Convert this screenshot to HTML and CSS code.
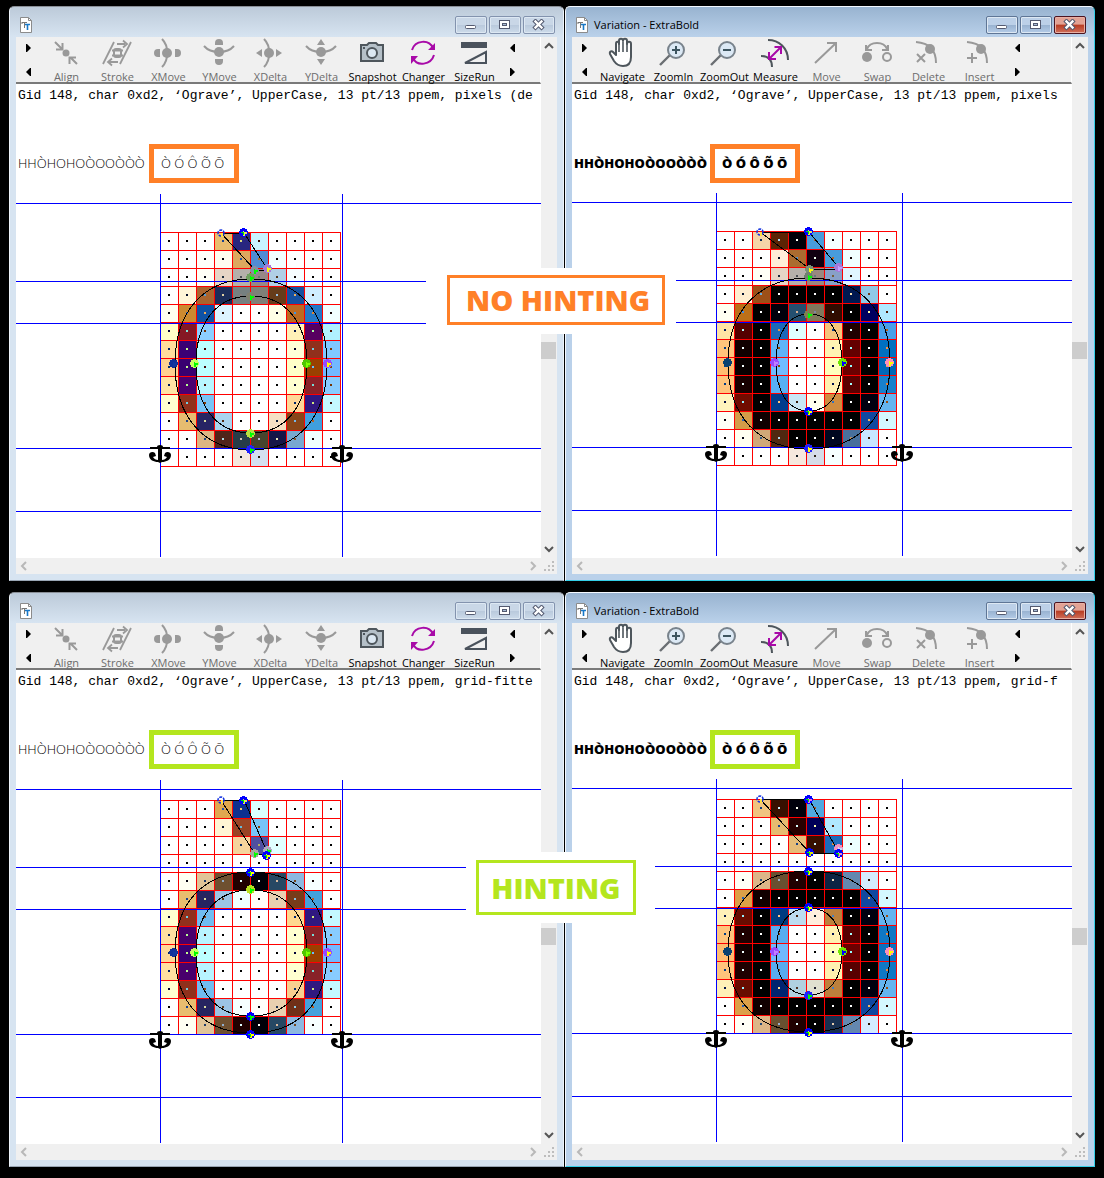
FILE: index.html
```html
<!DOCTYPE html>
<html lang="en">
<head>
<meta charset="utf-8">
<meta name="viewport" content="width=device-width, initial-scale=1">
<title>Hinting comparison</title>
<link rel="stylesheet" href="styles.css">
</head>
<body>
<svg class="sprite" aria-hidden="true">
  <symbol id="doc" viewBox="0 0 12 16"><path d="M.5.5h8l3 3v12H.5z" fill="#fff" stroke="#8b8b8b"/><path d="M8.500.5v3h3" fill="none" stroke="#8b8b8b"/><path d="M2 5.500h5M2 5v2M4.500 5v6" stroke="#777" fill="none"/><path d="M5 7.500h5M7.500 7v6" stroke="#1878c8" stroke-width="1.600" fill="none"/></symbol>
  <symbol id="min" viewBox="0 0 14 12"><rect x="1.500" y="6.500" width="10" height="3" rx="1" fill="#fff" stroke="#545a70"/></symbol>
  <symbol id="max" viewBox="0 0 14 12"><rect x="1.500" y="1.500" width="10" height="8" fill="#fff" stroke="#545a70"/><rect x="4.500" y="4.500" width="4" height="2" fill="#a9bdd6" stroke="#545a70"/></symbol>
  <symbol id="close" viewBox="0 0 14 12"><path d="M3.500 2.500l6 6M9.500 2.500l-6 6" stroke="#545a70" stroke-width="4.400" stroke-linecap="square"/><path d="M3.500 2.500l6 6M9.500 2.500l-6 6" stroke="#fff" stroke-width="2.400" stroke-linecap="square"/></symbol>
  <symbol id="tri-r" viewBox="0 0 5 8"><path d="M0 0h1l4 4-4 4H0z"/></symbol>
  <symbol id="tri-l" viewBox="0 0 5 8"><path d="M5 0H4L0 4l4 4h1z"/></symbol>
  <symbol id="up" viewBox="0 0 16 16"><path d="M4 11l4-4 4 4" fill="none" stroke="currentColor" stroke-width="2"/></symbol>
  <symbol id="down" viewBox="0 0 16 16"><path d="M4 5l4 4 4-4" fill="none" stroke="currentColor" stroke-width="2"/></symbol>
  <symbol id="left" viewBox="0 0 16 16"><path d="M10 4L6 8l4 4" fill="none" stroke="currentColor" stroke-width="2"/></symbol>
  <symbol id="right" viewBox="0 0 16 16"><path d="M6 4l4 4-4 4" fill="none" stroke="currentColor" stroke-width="2"/></symbol>
  <symbol id="grip" viewBox="0 0 16 16"><path d="M11 3h2v2h-2zM11 7h2v2h-2zM11 11h2v2h-2zM7 7h2v2H7zM7 11h2v2H7zM3 11h2v2H3z" fill="#bdbdbd"/></symbol>
  <symbol id="align" viewBox="0 0 32 32"><circle cx="16" cy="16" r="3.500" fill="#999"/><path d="M5 5l7 7M12.500 6v6.500H6M27 27l-6-6M19.500 27v-6.500H26" fill="none" stroke="#999" stroke-width="2"/></symbol>
  <symbol id="stroke" viewBox="0 0 32 32"><path d="M2 27L13 5M19 27L30 5M16 7h8M22 3.500L26 7l-4 3.500M17 25H8M11 21.500L7 25l4 3.500M11 13.500h11M11 18.500h11" fill="none" stroke="#999" stroke-width="1.800"/><rect x="13" y="12" width="7" height="8" rx="2" fill="none" stroke="#999" stroke-width="2"/></symbol>
  <symbol id="xmove" viewBox="0 0 32 32"><circle cx="15" cy="16" r="5" fill="#999"/><path d="M10 2C17 9 17 23 10 30" fill="none" stroke="#999" stroke-width="2"/><path d="M8 12v8H6a4 4 0 0 1 0-8zM23 12v8h2a4 4 0 0 0 0-8z" fill="#999"/></symbol>
  <symbol id="ymove" viewBox="0 0 32 32"><circle cx="16" cy="15" r="5" fill="#999"/><path d="M1 9C8 17 24 17 31 9" fill="none" stroke="#999" stroke-width="2"/><path d="M12 8V6a4 4 0 0 1 8 0v2zM12 22h8v2a4 4 0 0 1-8 0z" fill="#999"/></symbol>
  <symbol id="xdelta" viewBox="0 0 32 32"><circle cx="15" cy="16" r="5" fill="#999"/><path d="M10 2C17 9 17 23 10 30" fill="none" stroke="#999" stroke-width="2"/><path d="M8 12v8l-6-4zM22 12v8l6-4z" fill="#999"/></symbol>
  <symbol id="ydelta" viewBox="0 0 32 32"><circle cx="16" cy="15" r="5" fill="#999"/><path d="M1 9C8 17 24 17 31 9" fill="none" stroke="#999" stroke-width="2"/><path d="M12 8h8l-4-6zM12 22h8l-4 6z" fill="#999"/></symbol>
  <symbol id="snapshot" viewBox="0 0 32 32"><path d="M5 8h6l2-2h7l2 2h5v16H5z" fill="#b5c0c8" stroke="#4e565c" stroke-width="2"/><circle cx="16" cy="16" r="5" fill="#dce8f2" stroke="#4e565c" stroke-width="2"/><path d="M7 11h2" stroke="#4e565c" stroke-width="2"/></symbol>
  <symbol id="changer" viewBox="0 0 32 32"><path d="M5 13C8 3 22 2 26 11M27 18c-3 10-17 12-21 3" fill="none" stroke="#a80aa8" stroke-width="2"/><path d="M28 6v7h-7zM4 27v-8h7z" fill="#a80aa8"/></symbol>
  <symbol id="sizerun" viewBox="0 0 32 32"><path d="M3 5h26v6H3z" fill="#4a525c"/><path d="M7 26h21V15z" fill="none" stroke="#4a525c" stroke-width="2"/></symbol>
  <symbol id="navigate" viewBox="0 0 32 32"><path d="M10 18V7c0-3 3-3 3 0V4c0-3 4-3 4 0v0c0-3 4-3 4 0v3c0-3 4-3 4 0v13c0 6-3 9-8 9-5 0-7-2-9-5l-4-7c-1-3 2-3 3-2z" fill="#fff" stroke="#4e565c" stroke-width="2" stroke-linejoin="round"/><path d="M13 6v9M17 5v10M21 6v9" stroke="#4e565c" stroke-width="1.600"/></symbol>
  <symbol id="zoomin" viewBox="0 0 32 32"><path d="M3 28L13 18" stroke="#6b6f73" stroke-width="2.400"/><circle cx="19" cy="13" r="8" fill="#dce9f5" stroke="#79838c" stroke-width="2"/><path d="M15 13h8M19 9v8" stroke="#3d5560" stroke-width="2"/></symbol>
  <symbol id="zoomout" viewBox="0 0 32 32"><path d="M3 28L13 18" stroke="#6b6f73" stroke-width="2.400"/><circle cx="19" cy="13" r="8" fill="#dce9f5" stroke="#79838c" stroke-width="2"/><path d="M15 13h8" stroke="#3d5560" stroke-width="2"/></symbol>
  <symbol id="measure" viewBox="0 0 32 32"><path d="M9 3c11 0 20 8 20 20M2 19c7 0 11 4 11 11" fill="none" stroke="#4e565c" stroke-width="2"/><path d="M11 21L21 11M10 15v7h7M15.500 10H22v7" fill="none" stroke="#a80aa8" stroke-width="2"/></symbol>
  <symbol id="move" viewBox="0 0 32 32"><path d="M5 26L26 6M17 6h9v9" fill="none" stroke="#999" stroke-width="2"/></symbol>
  <symbol id="swap" viewBox="0 0 32 32"><circle cx="6" cy="20" r="5" fill="#999"/><circle cx="26" cy="20" r="4" fill="none" stroke="#999" stroke-width="2"/><path d="M6 12C9 4 23 4 26 12M5 8v5h6M27 8v5h-6" fill="none" stroke="#999" stroke-width="2"/></symbol>
  <symbol id="delete" viewBox="0 0 32 32"><circle cx="18" cy="12" r="5" fill="#999"/><path d="M4 5c13 1 20 8 20 21M5 17l8 8M13 17l-8 8" fill="none" stroke="#999" stroke-width="2"/></symbol>
  <symbol id="insert" viewBox="0 0 32 32"><circle cx="18" cy="12" r="5" fill="#999"/><path d="M4 5c13 1 20 8 20 21M9 16v10M4 21h10" fill="none" stroke="#999" stroke-width="2"/></symbol>
  <symbol id="anchor" viewBox="0 0 22 18"><path d="M8 2a3 2 0 0 1 6 0h7v2h-8v11H9V4H1V2zM0 10c0-3 4-4 6-2l1 3-3 1c1 2 3 3 5 3h4c2 0 4-1 5-3l-3-1 1-3c2-2 6-1 6 2 0 5-5 7-9 7l-2 1-2-1c-4 0-9-2-9-7z"/></symbol>
</svg>

<main class="compare">
<section class="pair">
  <article class="window">
    <header class="titlebar">
      <svg class="doc"><use href="#doc"/></svg><h2 class="title"></h2>
      <button class="cap" aria-label="Minimize"><svg><use href="#min"/></svg></button>
      <button class="cap" aria-label="Maximize"><svg><use href="#max"/></svg></button>
      <button class="cap" aria-label="Close"><svg><use href="#close"/></svg></button>
    </header>
    <div class="body">
      <div class="client">
        <nav class="toolbar">
          <div class="pager"><button aria-label="Next"><svg><use href="#tri-r"/></svg></button><button aria-label="Previous"><svg><use href="#tri-l"/></svg></button></div>
          <button class="tool" disabled><svg><use href="#align"/></svg>Align</button>
          <button class="tool" disabled><svg><use href="#stroke"/></svg>Stroke</button>
          <button class="tool" disabled><svg><use href="#xmove"/></svg>XMove</button>
          <button class="tool" disabled><svg><use href="#ymove"/></svg>YMove</button>
          <button class="tool" disabled><svg><use href="#xdelta"/></svg>XDelta</button>
          <button class="tool" disabled><svg><use href="#ydelta"/></svg>YDelta</button>
          <button class="tool"><svg><use href="#snapshot"/></svg>Snapshot</button>
          <button class="tool"><svg><use href="#changer"/></svg>Changer</button>
          <button class="tool"><svg><use href="#sizerun"/></svg>SizeRun</button>
          <div class="pager"><button aria-label="Previous"><svg><use href="#tri-l"/></svg></button><button aria-label="Next"><svg><use href="#tri-r"/></svg></button></div>
        </nav>
        <p class="readout">Gid 148, char 0xd2, ‘Ograve’, UpperCase, 13 pt/13 ppem, pixels (de</p>
        <div class="sample"><span>HHÒHOHOÒOOÒÒÒ</span><span class="marked">Ò Ó Ô Õ Ō</span></div>
        <svg class="glyph" data-glyph="lightPlain"></svg>
      </div>
      <div class="vscroll"><button aria-label="Scroll up"><svg><use href="#up"/></svg></button><span class="thumb"></span><button aria-label="Scroll down"><svg><use href="#down"/></svg></button></div>
      <div class="hscroll"><button aria-label="Scroll left"><svg><use href="#left"/></svg></button><button aria-label="Scroll right"><svg><use href="#right"/></svg></button></div>
      <svg class="grip"><use href="#grip"/></svg>
    </div>
  </article>
  <article class="window active">
    <header class="titlebar">
      <svg class="doc"><use href="#doc"/></svg><h2 class="title">Variation - ExtraBold</h2>
      <button class="cap" aria-label="Minimize"><svg><use href="#min"/></svg></button>
      <button class="cap" aria-label="Maximize"><svg><use href="#max"/></svg></button>
      <button class="cap shut" aria-label="Close"><svg><use href="#close"/></svg></button>
    </header>
    <div class="body">
      <div class="client">
        <nav class="toolbar">
          <div class="pager"><button aria-label="Next"><svg><use href="#tri-r"/></svg></button><button aria-label="Previous"><svg><use href="#tri-l"/></svg></button></div>
          <button class="tool"><svg><use href="#navigate"/></svg>Navigate</button>
          <button class="tool"><svg><use href="#zoomin"/></svg>ZoomIn</button>
          <button class="tool"><svg><use href="#zoomout"/></svg>ZoomOut</button>
          <button class="tool"><svg><use href="#measure"/></svg>Measure</button>
          <button class="tool" disabled><svg><use href="#move"/></svg>Move</button>
          <button class="tool" disabled><svg><use href="#swap"/></svg>Swap</button>
          <button class="tool" disabled><svg><use href="#delete"/></svg>Delete</button>
          <button class="tool" disabled><svg><use href="#insert"/></svg>Insert</button>
          <div class="pager"><button aria-label="Previous"><svg><use href="#tri-l"/></svg></button><button aria-label="Next"><svg><use href="#tri-r"/></svg></button></div>
        </nav>
        <p class="readout">Gid 148, char 0xd2, ‘Ograve’, UpperCase, 13 pt/13 ppem, pixels</p>
        <div class="sample"><span>HHÒHOHOÒOOÒÒÒ</span><span class="marked">Ò Ó Ô Õ Ō</span></div>
        <svg class="glyph" data-glyph="boldPlain"></svg>
      </div>
      <div class="vscroll"><button aria-label="Scroll up"><svg><use href="#up"/></svg></button><span class="thumb"></span><button aria-label="Scroll down"><svg><use href="#down"/></svg></button></div>
      <div class="hscroll"><button aria-label="Scroll left"><svg><use href="#left"/></svg></button><button aria-label="Scroll right"><svg><use href="#right"/></svg></button></div>
      <svg class="grip"><use href="#grip"/></svg>
    </div>
  </article>
  <div class="badge"><strong>NO HINTING</strong></div>
</section>

<section class="pair hinted">
  <article class="window">
    <header class="titlebar">
      <svg class="doc"><use href="#doc"/></svg><h2 class="title"></h2>
      <button class="cap" aria-label="Minimize"><svg><use href="#min"/></svg></button>
      <button class="cap" aria-label="Maximize"><svg><use href="#max"/></svg></button>
      <button class="cap" aria-label="Close"><svg><use href="#close"/></svg></button>
    </header>
    <div class="body">
      <div class="client">
        <nav class="toolbar">
          <div class="pager"><button aria-label="Next"><svg><use href="#tri-r"/></svg></button><button aria-label="Previous"><svg><use href="#tri-l"/></svg></button></div>
          <button class="tool" disabled><svg><use href="#align"/></svg>Align</button>
          <button class="tool" disabled><svg><use href="#stroke"/></svg>Stroke</button>
          <button class="tool" disabled><svg><use href="#xmove"/></svg>XMove</button>
          <button class="tool" disabled><svg><use href="#ymove"/></svg>YMove</button>
          <button class="tool" disabled><svg><use href="#xdelta"/></svg>XDelta</button>
          <button class="tool" disabled><svg><use href="#ydelta"/></svg>YDelta</button>
          <button class="tool"><svg><use href="#snapshot"/></svg>Snapshot</button>
          <button class="tool"><svg><use href="#changer"/></svg>Changer</button>
          <button class="tool"><svg><use href="#sizerun"/></svg>SizeRun</button>
          <div class="pager"><button aria-label="Previous"><svg><use href="#tri-l"/></svg></button><button aria-label="Next"><svg><use href="#tri-r"/></svg></button></div>
        </nav>
        <p class="readout">Gid 148, char 0xd2, ‘Ograve’, UpperCase, 13 pt/13 ppem, grid-fitte</p>
        <div class="sample"><span>HHÒHOHOÒOOÒÒÒ</span><span class="marked">Ò Ó Ô Õ Ō</span></div>
        <svg class="glyph" data-glyph="lightHinted"></svg>
      </div>
      <div class="vscroll"><button aria-label="Scroll up"><svg><use href="#up"/></svg></button><span class="thumb"></span><button aria-label="Scroll down"><svg><use href="#down"/></svg></button></div>
      <div class="hscroll"><button aria-label="Scroll left"><svg><use href="#left"/></svg></button><button aria-label="Scroll right"><svg><use href="#right"/></svg></button></div>
      <svg class="grip"><use href="#grip"/></svg>
    </div>
  </article>
  <article class="window active">
    <header class="titlebar">
      <svg class="doc"><use href="#doc"/></svg><h2 class="title">Variation - ExtraBold</h2>
      <button class="cap" aria-label="Minimize"><svg><use href="#min"/></svg></button>
      <button class="cap" aria-label="Maximize"><svg><use href="#max"/></svg></button>
      <button class="cap shut" aria-label="Close"><svg><use href="#close"/></svg></button>
    </header>
    <div class="body">
      <div class="client">
        <nav class="toolbar">
          <div class="pager"><button aria-label="Next"><svg><use href="#tri-r"/></svg></button><button aria-label="Previous"><svg><use href="#tri-l"/></svg></button></div>
          <button class="tool"><svg><use href="#navigate"/></svg>Navigate</button>
          <button class="tool"><svg><use href="#zoomin"/></svg>ZoomIn</button>
          <button class="tool"><svg><use href="#zoomout"/></svg>ZoomOut</button>
          <button class="tool"><svg><use href="#measure"/></svg>Measure</button>
          <button class="tool" disabled><svg><use href="#move"/></svg>Move</button>
          <button class="tool" disabled><svg><use href="#swap"/></svg>Swap</button>
          <button class="tool" disabled><svg><use href="#delete"/></svg>Delete</button>
          <button class="tool" disabled><svg><use href="#insert"/></svg>Insert</button>
          <div class="pager"><button aria-label="Previous"><svg><use href="#tri-l"/></svg></button><button aria-label="Next"><svg><use href="#tri-r"/></svg></button></div>
        </nav>
        <p class="readout">Gid 148, char 0xd2, ‘Ograve’, UpperCase, 13 pt/13 ppem, grid-f</p>
        <div class="sample"><span>HHÒHOHOÒOOÒÒÒ</span><span class="marked">Ò Ó Ô Õ Ō</span></div>
        <svg class="glyph" data-glyph="boldHinted"></svg>
      </div>
      <div class="vscroll"><button aria-label="Scroll up"><svg><use href="#up"/></svg></button><span class="thumb"></span><button aria-label="Scroll down"><svg><use href="#down"/></svg></button></div>
      <div class="hscroll"><button aria-label="Scroll left"><svg><use href="#left"/></svg></button><button aria-label="Scroll right"><svg><use href="#right"/></svg></button></div>
      <svg class="grip"><use href="#grip"/></svg>
    </div>
  </article>
  <div class="badge"><strong>HINTING</strong></div>
</section>
</main>
<script src="glyphs.js"></script>
</body>
</html>
```
FILE: styles.css
```css
* { box-sizing: border-box; }
body { margin: 0; background: #000; color: #000; font-family: "Open Sans", "Noto Sans", sans-serif; }
button { margin: 0; padding: 0; border: 0; background: none; color: inherit; font: inherit; }
svg { display: block; }
.sprite { position: absolute; width: 0; height: 0; }

.compare { display: grid; gap: 11px; padding: 6px 9px 11px; }
.pair { position: relative; display: grid; grid-template-columns: 556fr 530fr; --mark: #ff8028; }
.hinted { --mark: #b4e61e; }

.window {
  min-width: 0; margin-right: 1px; padding: 0 6px 6px;
  border: 1px solid #eef4fa; border-top-color: #8a8f96; border-bottom-color: #9aa6b4; border-radius: 5px 5px 0 0;
  background: linear-gradient(#bccad9, #d7e4f1 30px);
}
.window.active {
  margin-right: 0; border-color: #f4f9ff #35cfe8 #35cfe8 #f4f9ff;
  background: linear-gradient(#98b3d0, #bad1ea 30px);
}

.titlebar { display: flex; align-items: flex-start; gap: 2px; height: 30px; padding: 9px 2px 0 4px; }
.doc { width: 12px; height: 18px; }
.title { flex: 1; margin: 0; padding-left: 4px; font-size: 11px; font-weight: 400; line-height: 18px; }
.cap {
  display: grid; place-items: center; width: 32px; height: 18px;
  border: 1px solid #8393ae; border-radius: 2px;
  background: linear-gradient(#c9d7e7 50%, #b9c9dc 50%, #cddbea);
  box-shadow: inset 0 0 0 1px #dde8f3;
}
.active .cap { border-color: #5f7696; background: linear-gradient(#bcd0e8 50%, #98b2d0 50%, #b4cce8); }
.active .shut { border-color: #4c1420; background: linear-gradient(#e2a294 45%, #b83c22 50%, #d0705c); box-shadow: inset 0 0 0 1px #e8b0a4; }
.cap svg { width: 14px; height: 12px; }

.body { display: grid; grid-template-columns: minmax(0, 1fr) 16px; background: #f0f0f0; }
.client { background: #fff; overflow: hidden; }
.toolbar { display: flex; height: 47px; background: #f0f0f0; border-right: 1px solid #fff; border-bottom: 2px solid #7a7a7a; }
.pager { display: flex; flex: 0 0 25px; flex-direction: column; align-items: center; justify-content: space-between; padding: 7px 0 6px; }
.pager svg { width: 5px; height: 8px; }
.tool { display: flex; flex: 0 0 51px; flex-direction: column; align-items: center; font-size: 11px; line-height: 16px; white-space: nowrap; }
.tool svg { flex: none; width: 32px; height: 32px; margin-right: 1px; }
.tool:disabled { color: #6d6d6d; }

.readout { margin: 0; padding-left: 2px; font: 13px/24px "Liberation Mono", monospace; white-space: nowrap; }
.sample { display: grid; grid-template-columns: 133px 90px; align-items: center; padding-top: 36px; font-size: 13px; line-height: 29px; font-weight: 300; white-space: nowrap; }
.sample span:first-child { padding-left: 2px; }
.active .sample { grid-template-columns: 138px 90px; font-weight: 800; }
.marked { border: 5px solid var(--mark); padding-left: 7px; }
.glyph { width: 100%; height: 375px; overflow: hidden; }
.glyph path, .glyph rect { shape-rendering: crispEdges; }

.vscroll { display: grid; grid-template-rows: 16px 288fr 17px 183fr 16px; color: #555; }
.vscroll svg, .hscroll svg, .grip { width: 16px; height: 16px; }
.thumb { grid-row: 3; width: 15px; background: #cdcdcd; }
.vscroll button:last-child { grid-row: 5; }
.hscroll { display: flex; justify-content: space-between; color: #b8b8b8; }

/* Caption laid over the seam between the two windows */
.badge { position: absolute; left: 38.4%; top: 262px; padding: 7px 11px 9px 21px; background: #fff; }
.badge strong { display: block; padding: 0 12px 0 16px; border: 3px solid var(--mark); color: var(--mark); font-size: 29px; line-height: 44px; font-weight: 800; }
.hinted .badge { left: 42.1%; top: 260px; padding: 8px 19px 8px 10px; }
.hinted .badge strong { padding: 0 12px; line-height: 49px; }
```
FILE: glyphs.js
```js
// Each row lists ten pixel colours; "." is an uncovered pixel.
const blank = ". . . . . . . . . .";
const glyphs = {
  lightPlain: {
    top: 49, base: 20, right: 326, mid: 132, x: [15, 36, 147, 167], y: [47, 64, 201, 218], cx: 91,
    accent: "M61 1H84L108 38H95Z",
    rows: [
      ". . . e8bd6f 28267f c9f3ff . . . .",
      ". . fffffa fffdf0 dca95f 518cd4 f2feff . . .",
      ". . fffff5 e6d5c5 b5b0aa 978787 b0cfe6 f5fdff . .",
      ". fff5d8 a9642f 1c2d5a 768080 7f8078 663c1a 1650a0 cfeeff .",
      "fffff0 cc8a30 0f52a5 dcf4ff . . ffffe6 bc6a22 2478c8 f0ffff",
      "ffffc8 851824 8ccfff . . . . fff0b8 570060 b0f0ff",
      "ffdc9c 3a0074 bcffff . . . . ffffd8 90301c 80c8ff",
      "ffd090 380070 bcffff . . . . ffffc8 994000 72b8ff",
      "ffe4a4 4c0070 b8f6ff . . . . ffffd0 8a2228 88ccff",
      "ffffd0 90301c 78c4f6 . . . . ffd898 301880 c4f8ff",
      ". e6bc70 262464 a9d4ee . . f5e0c4 884618 409fde .",
      ". . ddb683 50241a 263c48 47452e 161648 78a8d0 f0ffff .",
      ". . . . f5e8de d5e0f0 . . . ."
    ],
    points: [[61, 1, "ring"], [84, 0, "#00f", "#e8e860"], [95, 38, "#8890a0", "#0f0"], [108, 36, "#a878d8", "#ff0"], [91, 45, "#70a060", "#0f0"], [91, 64, "#808070", "#0f0"], [14, 131, "#10309a", "#1038a0"], [35, 131, "#c8ff60", "#0f0"], [147, 131, "#50c800", "#80ff00"], [168, 131, "#9848ff", "#ff0"], [91, 201, "#b8e040", "#0f0"], [91, 217, "#2020ff", "#0f0"]]
  },
  boldPlain: {
    top: 48, base: 19, right: 330, mid: 132, x: [12, 60, 126, 174], y: [47, 83, 180, 218], cx: 93,
    accent: "M44 1H93L124 38H94Z",
    rows: [
      ". . f5d4a8 5c2404 000008 489cdc f5ffff . . .",
      ". . . ffeed8 aa6c30 100010 489cdc f0ffff . .",
      ". . fffff5 e6d5c5 b5b0aa 9a8880 88a0c8 e0f5ff . .",
      ". ffeed0 9c5018 000000 000000 000000 000000 001850 90c8e6 .",
      "fffff0 bc7018 000000 00000c 245070 80785c 300c00 000000 000060 b0e8ff",
      "ffe4a4 540000 000000 1c68b8 e0ffff . f5c47c 200000 000000 48a0e8",
      "ffc47c 100000 000000 60b4f8 . . fff4b4 640000 000000 0070c0",
      "ffbc70 080000 000000 70bcff . . ffffbc 6c0000 000000 0068b8",
      "ffc47c 180000 000000 58b0f4 . . fff0b0 5c0000 000000 1880cc",
      "fff4bc 700c00 000000 003c8c c8e6f5 ffffee d08c40 000000 000010 64b4f0",
      "fffff5 d49c48 100000 000000 000000 000000 000000 000000 1048a0 d4f8ff",
      ". fffff0 d0a878 502810 000000 000000 000820 48709c c8e6ff .",
      ". . . . f5e8de d5dce8 f5ffff . . ."
    ],
    points: [[44, 1, "ring"], [93, 0, "#00f", "#e8e860"], [94, 38, "#789078", "#ff0"], [123, 36, "#a878d8", "#c0a0ff"], [93, 45, "#708070", "#0f0"], [93, 83, "#808050", "#0f0"], [12, 131, "#084070", "#084070"], [59, 131, "#9848ff", "#c080ff"], [127, 131, "#70e800", "#00f"], [174, 131, "#ff90b8", "#ff0"], [93, 180, "#00f", "#ff0"], [93, 217, "#2020ff", "#ff0"]]
  },
  lightHinted: {
    top: 31, base: 20, right: 326, mid: 153, x: [15, 36, 147, 167], y: [72, 90, 216, 233], cx: 91,
    accent: "M61 0H84L108 54H95Z",
    rows: [
      ". . . e0a850 0c3090 daffff . . . .",
      ". . . fff5d4 984424 78c4f8 . . . .",
      ". . . . f5d49c 5050a0 e0ffff . . .",
      blank,
      ". fffff2 e0c498 6e5030 200000 000008 264864 8cb8e0 f5ffff .",
      ". e8bd6f 262460 9cc4e4 f0ffff fffffa e8d0b0 783c1a 44a2dc .",
      "ffffd0 90301c 70bcf0 . . . . ffd890 301880 c4f8ff",
      "ffe0a0 48006c b8f4ff . . . . ffffd0 882228 88ccff",
      "ffd898 3a0074 bcffff . . . . ffffc8 994000 74b8ff",
      "ffe0a0 48006c b8f4ff . . . . ffffd0 882228 88ccff",
      "ffffd0 90301c 70bcf0 . . . . f8d090 301880 c4f8ff",
      ". e8bd6f 262460 9cc4e4 f5ffff fffffa e8d0b0 703018 44a2dc .",
      ". fffff2 e0c498 6e5030 200000 000008 264864 8cb8e0 f5ffff ."
    ],
    points: [[61, 0, "ring"], [84, 0, "#00f", "#e8e860"], [95, 53, "#a8a8a0", "#0f0"], [108, 50, "#b0a8c0", "#0f0"], [107, 55, "#00f", "#ff0"], [91, 72, "#00f", "#ff0"], [91, 89, "#b8e020", "#0f0"], [14, 152, "#10309a", "#1038a0"], [35, 152, "#c8ff60", "#0f0"], [147, 152, "#50c800", "#80ff00"], [168, 152, "#9848ff", "#ff0"], [91, 216, "#00f", "#0f0"], [91, 234, "#00f", "#ff0"]]
  },
  boldHinted: {
    top: 30, base: 19, right: 330, mid: 153, x: [12, 60, 126, 174], y: [72, 109, 196, 233], cx: 93,
    accent: "M44 0H93L123 54H94Z",
    rows: [
      ". . f0c480 381000 00000c 50a8e0 . . . .",
      ". . . e6bc70 280000 000058 b0e8ff . . .",
      ". . . . e6bc78 381000 1c6cbc ecffff . .",
      blank,
      ". fffff5 dcb688 685030 200000 000000 0c2444 6488b0 d4ecff .",
      ". dca048 100000 000000 000000 000000 000000 000000 1048a0 d4f8ff",
      "fff0b8 680c00 000000 003c80 bcdcf0 ffeede bc803c 000000 000010 64b4f0",
      "ffc47c 200000 000000 58acf0 . . fff0b0 580000 000000 1078c4",
      "ffbc70 100000 000000 70b8fc . . ffffbc 6c0000 000000 0c70c0",
      "ffc47c 200000 000000 58acf0 . . fff0b0 580000 000000 1078c4",
      "fff0b8 680c00 000000 002470 b0d0e0 e0e0d0 bc803c 000000 000010 64b4f0",
      ". dca048 100000 000000 000000 000000 000000 000000 1048a0 d4f8ff",
      ". fffff5 dcb688 685030 200000 000000 183050 6488b0 d4ecff ."
    ],
    points: [[44, 0, "ring"], [93, 0, "#00f", "#e878e8"], [94, 53, "#00f", "#d8e800"], [123, 49, "#f090c0", "#c0e0ff"], [123, 54, "#00f", "#f090c0"], [93, 72, "#00f", "#ff0"], [93, 108, "#00f", "#ff0"], [12, 152, "#084070", "#084070"], [59, 152, "#9848ff", "#c080ff"], [127, 152, "#70e800", "#00f"], [174, 152, "#ff90b8", "#ff0"], [93, 196, "#2020ff", "#0f0"], [93, 233, "#00f", "#ff0"]]
  }
};

const CELL = 18, LEFT = 144;

function oval(cx, cy, l, t, r, b) {
  const k = 0.62;
  const u = cy - (cy - t) * k, d = cy + (b - cy) * k;
  const w = cx - (cx - l) * k, e = cx + (r - cx) * k;
  return `M${l} ${cy}C${l} ${u} ${w} ${t} ${cx} ${t}S${r} ${u} ${r} ${cy}S${e} ${b} ${cx} ${b}S${l} ${d} ${l} ${cy}Z`;
}

// Outline point: a seven-pixel blob whose lower half carries the second colour
function point([x, y, a, b]) {
  if (a === "ring") return `<circle cx="${x}" cy="${y}" r="3" fill="none" stroke="#1030e0" stroke-width="1.500" stroke-dasharray="3 1"/><path d="M${x} ${y}h2v4h-2z" fill="#ffe040"/>`;
  const tick = a === "#00f" ? `<path d="M${x - 3} ${y}h2v1h-2zM${x - 1} ${y}h1v3h-1z" fill="#0e0"/>` : "";
  return `<path d="M${x - 2} ${y - 4}h3v1h2v2h1v3h-1v2h-2v1h-3v-1h-2v-2h-1v-3h1v-2h2z" fill="${a}"/>` +
    `<path d="M${x - 1} ${y - 1}h1v1h3v2h-2v2h-2z" fill="${b}"/>${tick}`;
}

function draw(svg, g) {
  let cells = "", grid = "", guides = "";
  g.rows.forEach((row, r) => row.split(" ").forEach((c, i) => {
    const hex = c === "." ? "ffffff" : c;
    const dot = (0xffffff - parseInt(hex, 16)).toString(16).padStart(6, "0");
    if (c !== ".") cells += `<rect x="${i * CELL}" y="${r * CELL}" width="18" height="18" fill="#${hex}"/>`;
    grid += `<rect x="${i * CELL + 8}" y="${r * CELL + 8}" width="2" height="2" fill="#${dot}"/>`;
  }));
  for (let i = 0; i <= 13; i++) grid += `<rect y="${i * CELL}" width="181" height="1" fill="#f00"/>`;
  for (let i = 0; i <= 10; i++) grid += `<rect x="${i * CELL}" width="1" height="235" fill="#f00"/>`;
  for (const dy of [0, 78, 120, 245, 308]) guides += `<rect y="${g.base + dy}" width="100%" height="1"/>`;
  for (const x of [LEFT, g.right]) guides += `<rect x="${x}" y="${g.base - 9}" width="1" height="363"/>`;
  const [ol, il, ir, or] = g.x, [ot, it, ib, ob] = g.y;
  const lines = oval(g.cx, g.mid, ol, ot, or, ob) + oval(g.cx, g.mid, il, it, ir, ib) + g.accent;
  svg.innerHTML =
    `<g transform="translate(${LEFT} ${g.top})">${cells}${grid}</g><g fill="#00f">${guides}</g>` +
    `<g transform="translate(${LEFT} ${g.top})"><path d="${lines}" fill="none" stroke="#000"/>${g.points.map(point).join("")}</g>` +
    [LEFT, g.right].map(x => `<use href="#anchor" x="${x - 11}" y="${g.base + 242}" width="22" height="18"/>`).join("");
}

document.querySelectorAll("[data-glyph]").forEach(svg => draw(svg, glyphs[svg.dataset.glyph]));
```
